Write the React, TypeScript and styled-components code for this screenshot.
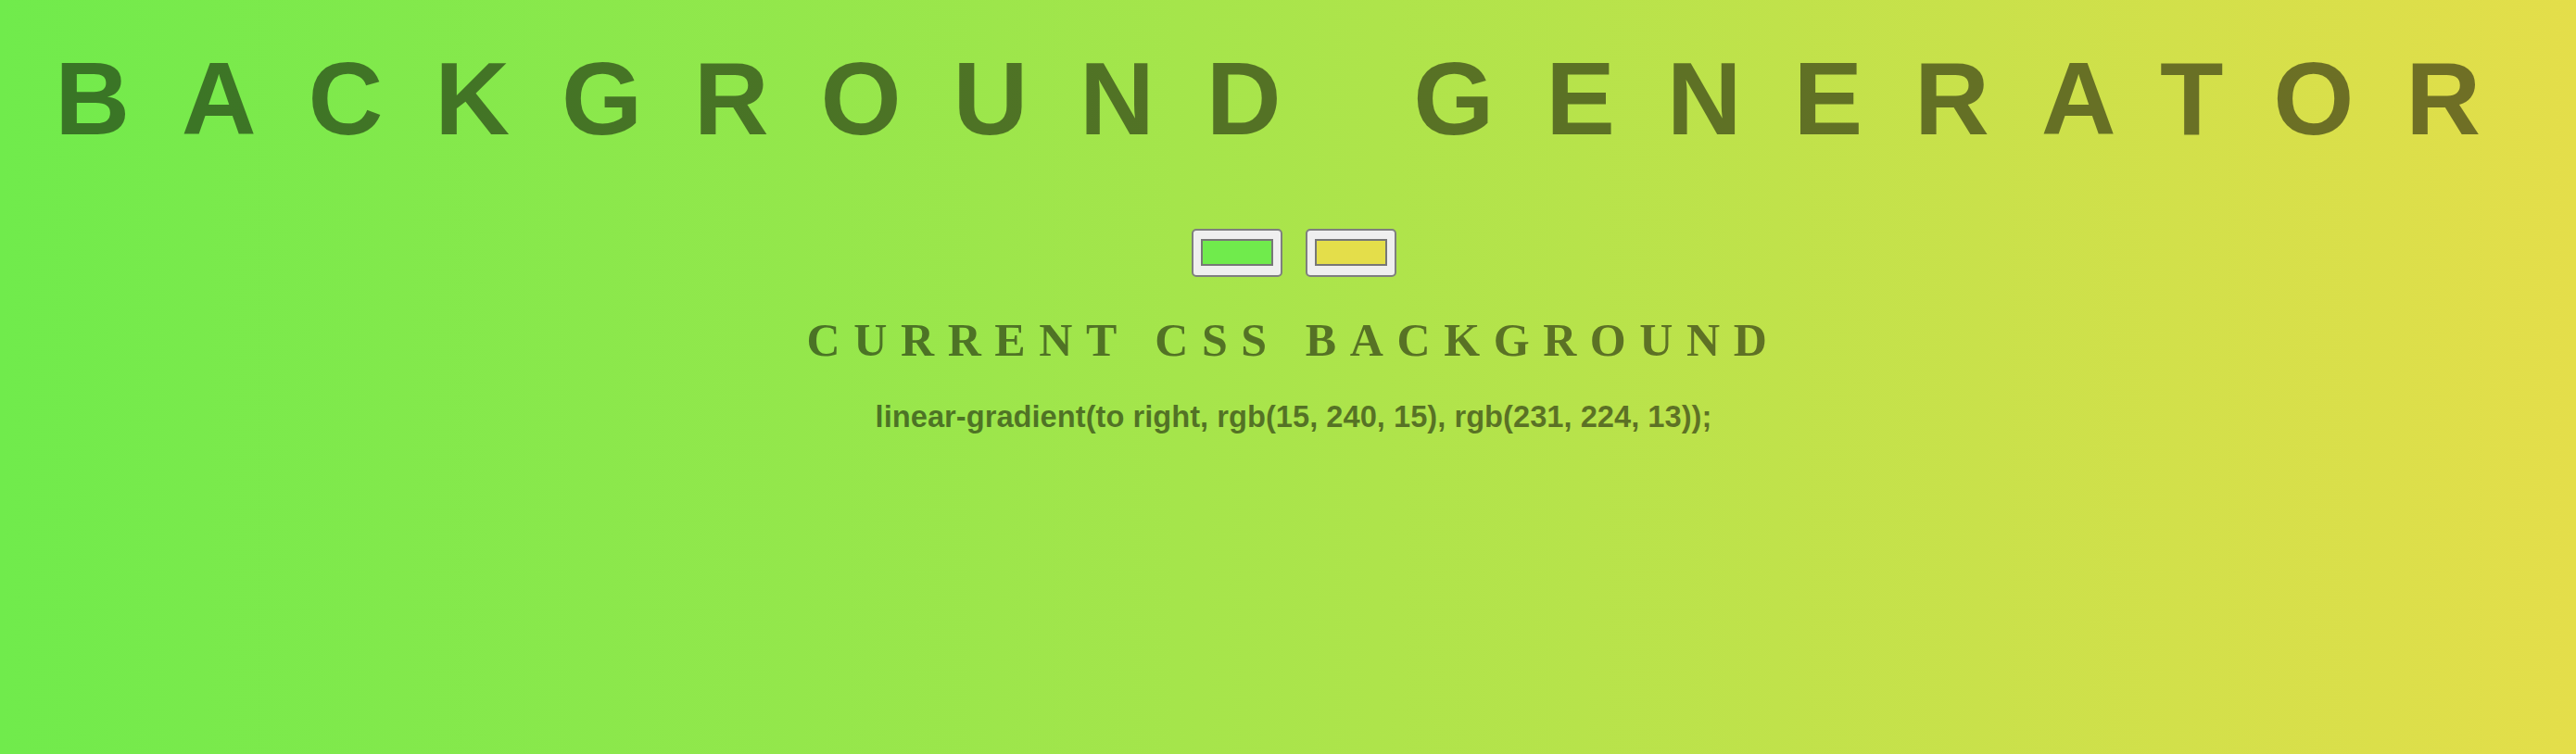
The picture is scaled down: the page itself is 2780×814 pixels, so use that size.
import React, { useState } from "react";
import styled, { createGlobalStyle } from "styled-components";

const GlobalStyle = createGlobalStyle`
  html, body {
    margin: 0;
    padding: 0;
  }
  body {
    font-family: "Liberation Sans", Arial, sans-serif;
  }
`;

const Page = styled.main<{ $from: string; $to: string }>`
  min-height: 100vh;
  box-sizing: border-box;
  padding: 51px 0 0 12px;
  display: flex;
  flex-direction: column;
  align-items: center;
  background: linear-gradient(to right, ${(p) => p.$from}, ${(p) => p.$to});
  color: rgba(0, 0, 0, 0.5);
`;

const Title = styled.h1`
  margin: 0;
  font-family: "Liberation Sans", Arial, sans-serif;
  font-weight: 700;
  font-size: 112px;
  line-height: 112px;
  letter-spacing: 55.8px;
  white-space: nowrap;
  text-align: center;
`;

const Pickers = styled.div`
  display: flex;
  gap: 25px;
  margin-top: 84px;
`;

const ColorInput = styled.input.attrs({ type: "color" })`
  -webkit-appearance: none;
  appearance: none;
  box-sizing: border-box;
  width: 98px;
  height: 52px;
  margin: 0;
  padding: 9px 8px 10px;
  border: 2px solid #7f7f7f;
  border-radius: 5px;
  background: #efefef;
  cursor: pointer;

  &::-webkit-color-swatch-wrapper {
    padding: 0;
  }
  &::-webkit-color-swatch {
    border: 2px solid #777777;
    border-radius: 0;
  }
`;

const Subtitle = styled.h3`
  margin: 43px 0 0;
  font-family: "Liberation Serif", "Times New Roman", serif;
  font-weight: 700;
  font-size: 50px;
  line-height: 50px;
  letter-spacing: 14.6px;
  white-space: nowrap;
  text-align: center;
`;

const CssText = styled.p`
  margin: 42px 0 0;
  font-family: "Liberation Sans", Arial, sans-serif;
  font-weight: 700;
  font-size: 32.7px;
  line-height: 32.5px;
  white-space: nowrap;
  text-align: center;
`;

export default function App() {
  const [from, setFrom] = useState("#70eb4c");
  const [to, setTo] = useState("#e4de4a");

  return (
    <>
      <GlobalStyle />
      <Page $from={from} $to={to}>
        <Title>BACKGROUND GENERATOR</Title>
        <Pickers>
          <ColorInput value={from} onChange={(e) => setFrom(e.target.value)} />
          <ColorInput value={to} onChange={(e) => setTo(e.target.value)} />
        </Pickers>
        <Subtitle>CURRENT CSS BACKGROUND</Subtitle>
        <CssText>linear-gradient(to right, rgb(15, 240, 15), rgb(231, 224, 13));</CssText>
      </Page>
    </>
  );
}
